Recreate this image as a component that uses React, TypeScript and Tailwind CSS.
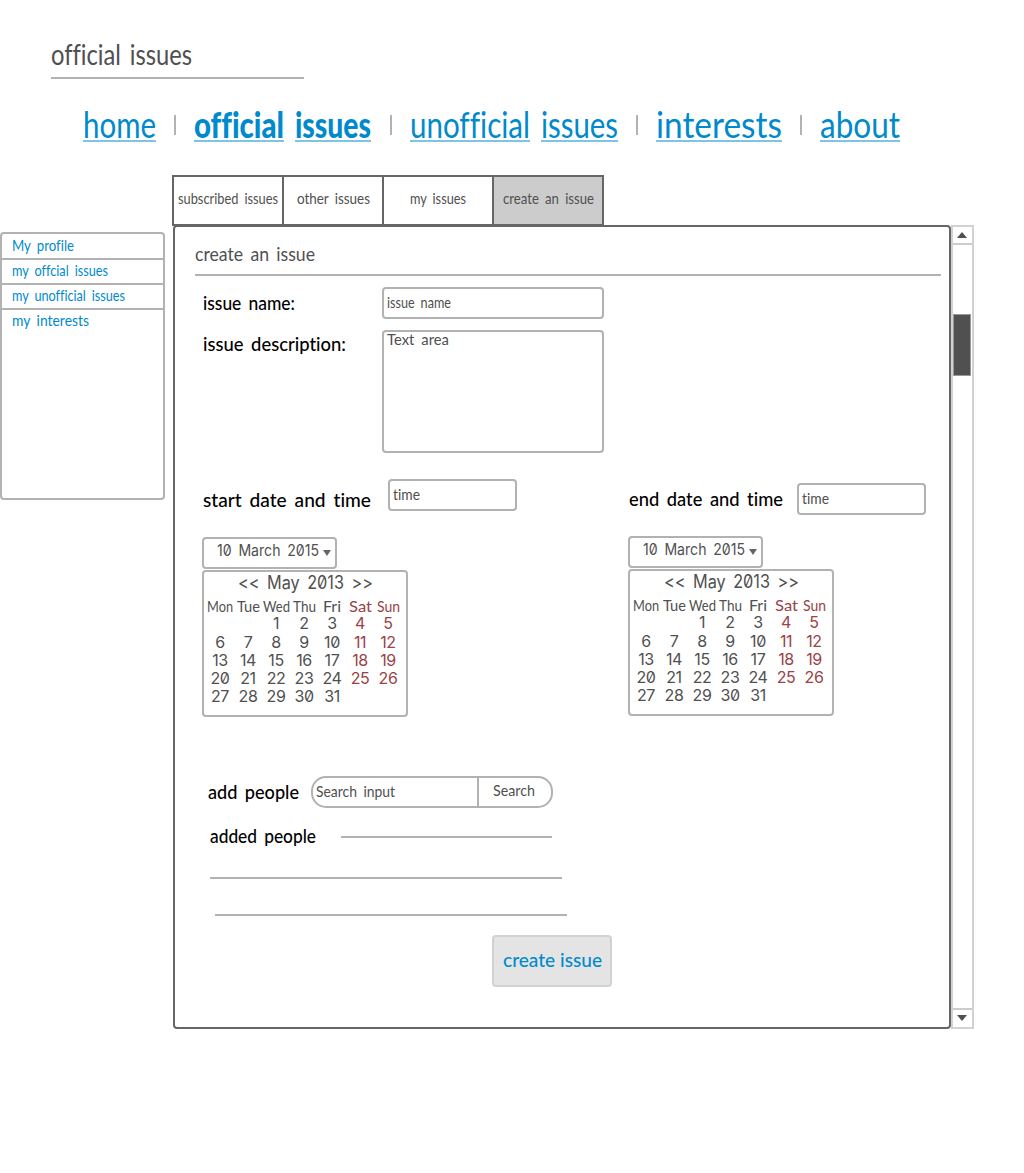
import { useLayoutEffect, useRef } from "react";

// One line of text, condensed or widened to fill the width of its box.
function T({ children, className = "" }: { children: string; className?: string }) {
  const ref = useRef<HTMLSpanElement>(null);
  useLayoutEffect(() => {
    const el = ref.current;
    if (!el || !el.parentElement) return;
    el.style.transform = "none";
    const room = el.parentElement.getBoundingClientRect().width;
    el.style.transform = `translateY(1px) scaleX(${room / el.getBoundingClientRect().width})`;
  }, [children]);
  return (
    <div className={`shrink-0 whitespace-nowrap leading-none ${className}`}>
      <span ref={ref} className="inline-block origin-left">{children}</span>
    </div>
  );
}

const link = "h-[37px] border-b-2 border-[#7fc4e7] text-[36px] text-[#008ace]";
const field = "shrink-0 rounded-[4px] border-2 border-[#b2b2b2] bg-white text-[15px] text-[#505050]";
const label = "text-[20px] text-black font-medium";

function Sep({ className }: { className: string }) {
  return <div className={`mt-[10px] h-5 w-[2px] shrink-0 bg-[#b2b2b2] ${className}`} />;
}

const weekdays = [
  ["Mon", "w-[26px]"], ["Tue", "w-[23px]"], ["Wed", "w-[27px]"], ["Thu", "w-[23px]"],
  ["Fri", "w-[18px]"], ["Sat", "w-[23px]"], ["Sun", "w-[23px]"],
];

const weeks = [
  ["", "", "1", "2", "3", "4", "5"],
  ["6", "7", "8", "9", "10", "11", "12"],
  ["13", "14", "15", "16", "17", "18", "19"],
  ["20", "21", "22", "23", "24", "25", "26"],
  ["27", "28", "29", "30", "31", "", ""],
];

function DatePicker({ className }: { className: string }) {
  return (
    <div className={`w-[206px] shrink-0 ${className}`}>
      <div className="flex h-8 w-[135px] rounded-[4px] border-2 border-[#b2b2b2] text-[#505050]">
        <T className="ml-[13px] mt-[2px] w-[102px] font-[Inter] text-[16px] slashed-zero">10 March 2015</T>
        <svg className="ml-1 mt-[11px] h-[6px] w-2" viewBox="0 0 8 6"><path d="M0 0h8L4 6z" fill="#666" /></svg>
      </div>
      <div className="mt-px h-[147px] rounded-[4px] border-2 border-[#b2b2b2] pl-[2px] pr-1 text-[#505050]">
        <T className="ml-[32px] mt-px w-[135px] font-[Inter] text-[18px] slashed-zero">{"<< May 2013 >>"}</T>
        <div className="mt-[7px] grid h-4 grid-cols-7 text-[15px]">
          {weekdays.map(([d, w], i) => (
            <div key={d} className={i > 4 ? "flex justify-center text-[#9a4245]" : "flex justify-center"}>
              <T className={w}>{d}</T>
            </div>
          ))}
        </div>
        {weeks.map((week, r) => (
          <div key={r} className={`grid grid-cols-7 text-center font-[Inter] text-[16px] leading-[18px] tracking-[-0.4px] slashed-zero ${r === 0 ? "h-[19px]" : "h-[18px]"}`}>
            {week.map((d, i) => <span key={i} className={i > 4 ? "text-[#9a4245]" : ""}>{d}</span>)}
          </div>
        ))}
      </div>
    </div>
  );
}

export default function App() {
  return (
    <div className="h-[1173px] w-[1024px] overflow-hidden bg-white font-[Lato,sans-serif] [font-variant-ligatures:none] [word-spacing:0.2em]">
      <header className="ml-[51px] h-[79px] w-[253px] border-b-2 border-[#b2b2b2] pt-[39px] text-[28px] text-[#505050]">
        <T className="w-[141px]">official issues</T>
      </header>
      <nav className="ml-[83px] mt-[26px] flex h-[70px] items-start">
        <T className={`${link} w-[73px]`}>home</T>
        <Sep className="ml-[18px]" />
        <T className={`${link} ml-[18px] w-[90px] font-black`}>official</T>
        <T className={`${link} ml-[11px] w-[76px] font-black`}>issues</T>
        <Sep className="ml-[19px]" />
        <T className={`${link} ml-[18px] w-[120px]`}>unofficial</T>
        <T className={`${link} ml-[11px] w-[77px]`}>issues</T>
        <Sep className="ml-[18px]" />
        <T className={`${link} ml-[18px] w-[126px]`}>interests</T>
        <Sep className="ml-[18px]" />
        <T className={`${link} ml-[18px] w-[80px]`}>about</T>
      </nav>
      <div className="flex items-start">
        <aside className="mt-[57px] h-[268px] w-[165px] shrink-0 rounded-[4px] border-2 border-[#b2b2b2] text-[15px] text-[#008ace]">
          <div className="h-[26px] border-b-2 border-[#b2b2b2] pl-[10px] pt-[3px]"><T className="w-[62px]">My profile</T></div>
          <div className="h-[25px] border-b-2 border-[#b2b2b2] pl-[10px] pt-[2px]"><T className="w-[96px]">my offcial issues</T></div>
          <div className="h-[25px] border-b-2 border-[#b2b2b2] pl-[10px] pt-[2px]"><T className="w-[113px]">my unofficial issues</T></div>
          <div className="pl-[10px] pt-[2px]"><T className="w-[77px]">my interests</T></div>
        </aside>
        <main className="ml-[7px] w-[802px]">
          <div className="flex h-[51px] w-[432px] border-2 border-[#666] text-[15px] text-[#505050]">
            <div className="flex w-[110px] justify-center border-r-2 border-[#666] pt-[13px]"><T className="w-[100px]">subscribed issues</T></div>
            <div className="flex w-[100px] justify-center border-r-2 border-[#666] pt-[13px]"><T className="w-[73px]">other issues</T></div>
            <div className="flex w-[110px] justify-center border-r-2 border-[#666] pt-[13px]"><T className="w-[56px]">my issues</T></div>
            <div className="flex w-[108px] justify-center bg-[#ccc] pt-[13px]"><T className="w-[91px]">create an issue</T></div>
          </div>
          <div className="-mt-px ml-px flex">
            <section className="h-[804px] w-[778px] shrink-0 rounded-[4px] border-2 border-[#666] pt-[15px]">
              <div className="ml-5 h-[34px] w-[746px] border-b-2 border-[#b2b2b2] text-[20px] text-[#505050]">
                <T className="w-[120px]">create an issue</T>
              </div>
              <div className="flex h-[54px] items-start">
                <T className={`${label} ml-7 mt-[15px] w-[92px]`}>issue name:</T>
                <div className={`${field} ml-[87px] mt-[11px] h-8 w-[222px] pl-[3px] pt-[5px]`}><T className="w-[64px]">issue name</T></div>
              </div>
              <div className="flex h-[149px] items-start">
                <T className={`${label} ml-7 mt-[2px] w-[143px]`}>issue description:</T>
                <div className={`${field} ml-9 h-[123px] w-[222px] pl-[3px]`}><T className="-mt-px w-[62px]">Text area</T></div>
              </div>
              <div className="flex h-[57px] items-start">
                <T className={`${label} ml-7 mt-[9px] w-[168px]`}>start date and time</T>
                <div className={`${field} ml-[17px] h-8 w-[129px] pl-[3px] pt-[5px]`}><T className="w-[27px]">time</T></div>
                <T className={`${label} ml-[112px] mt-2 w-[154px]`}>end date and time</T>
                <div className={`${field} ml-[14px] mt-1 h-8 w-[129px] pl-[3px] pt-[5px]`}><T className="w-[27px]">time</T></div>
              </div>
              <div className="flex h-[240px] items-start">
                <DatePicker className="ml-[27px] mt-px" />
                <DatePicker className="ml-[220px]" />
              </div>
              <div className="flex h-[49px] items-start">
                <T className={`${label} ml-[33px] mt-1 w-[91px]`}>add people</T>
                <div className="ml-3 flex h-8 w-[242px] rounded-[15px] border-2 border-[#b2b2b2] text-[15px] text-[#505050]">
                  <div className="w-[166px] border-r-2 border-[#b2b2b2] pl-[3px] pt-[5px]"><T className="w-[79px]">Search input</T></div>
                  <div className="pl-[14px] pt-1"><T className="w-[42px]">Search</T></div>
                </div>
              </div>
              <div className="flex h-[52px] items-start">
                <T className={`${label} -mt-px ml-[35px] w-[106px]`}>added people</T>
                <div className="ml-[25px] mt-[11px] h-[2px] w-[211px] bg-[#b2b2b2]" />
              </div>
              <div className="ml-[35px] h-[2px] w-[352px] bg-[#b2b2b2]" />
              <div className="ml-10 mt-[35px] h-[2px] w-[352px] bg-[#b2b2b2]" />
              <button className="ml-[317px] mt-[19px] flex h-[52px] w-[120px] items-start justify-center rounded-[4px] border-2 border-[#d2d2d2] bg-[#e4e4e4] pt-[11px] text-left text-[20px] font-medium text-[#008ace]">
                <T className="w-[99px]">create issue</T>
              </button>
            </section>
            <div className="flex h-[804px] w-[23px] flex-col items-start border-2 border-[#d2d2d2]">
              <div className="flex h-[18px] w-full shrink-0 border-b-2 border-[#ccc] pl-1 pt-[5px]">
                <svg className="h-[6px] w-[10px]" viewBox="0 0 10 6"><path d="M5 0l5 6H0z" fill="#505050" /></svg>
              </div>
              <div className="mt-[69px] h-[62px] w-[18px] shrink-0 border border-[#999] bg-[#505050]" />
              <div className="mt-auto flex h-[19px] w-full shrink-0 border-t-2 border-[#ccc] pl-1 pt-[5px]">
                <svg className="h-[6px] w-[10px]" viewBox="0 0 10 6"><path d="M0 0h10L5 6z" fill="#505050" /></svg>
              </div>
            </div>
          </div>
        </main>
      </div>
    </div>
  );
}
